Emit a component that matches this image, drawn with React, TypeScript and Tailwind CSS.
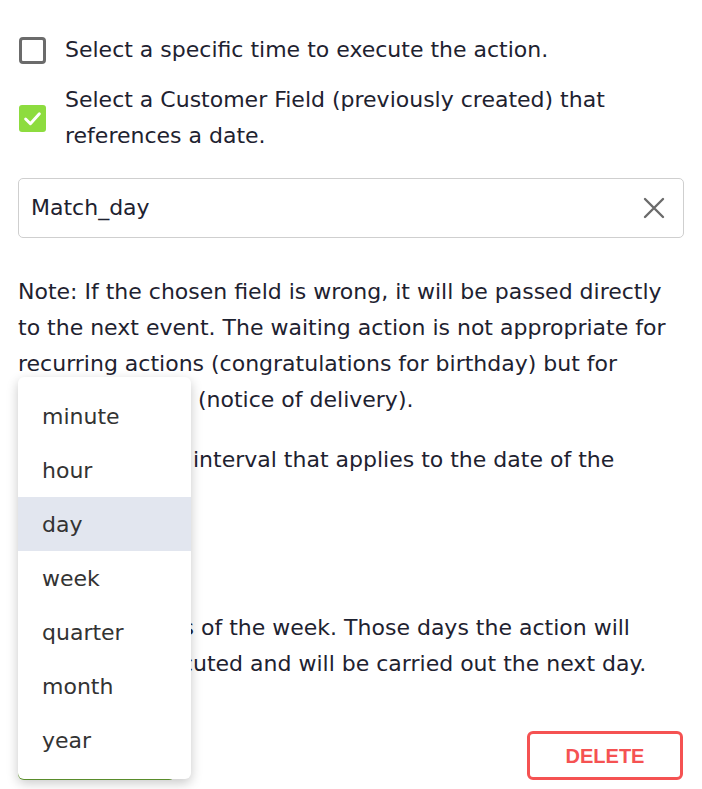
import React from "react";

const items = ["minute", "hour", "day", "week", "quarter", "month", "year"];

export default function App() {
  return (
    <div className="relative w-[702px] h-[789px] bg-white overflow-hidden text-[#1e2230] font-['DejaVu_Sans',sans-serif]">
      <div className="flex flex-col px-[18px] pt-[32px] text-[22px] leading-[36px]">
        <label className="flex items-center gap-[19px] pl-[1px]">
          <span className="w-[27px] h-[27px] shrink-0 rounded-[4px] border-[3px] border-[#6b6b6b] bg-white" />
          <span className="whitespace-nowrap">Select a specific time to execute the action.</span>
        </label>
        <label className="mt-[14px] flex items-center gap-[19px] pl-[1px]">
          <span className="w-[27px] h-[27px] shrink-0 rounded-[3px] bg-[#8ddc3f] flex items-center justify-center">
            <svg width="19" height="19" viewBox="0 0 18 18" fill="none">
              <path d="M2.5 9.5 L7 14 L15.5 4.5" stroke="white" strokeWidth="2.8" strokeLinecap="round" strokeLinejoin="round" />
            </svg>
          </span>
          <span className="whitespace-nowrap">
            Select a Customer Field (previously created) that
            <br />
            references a date.
          </span>
        </label>

        <div className="mt-[24px] h-[60px] rounded-[5px] border border-[#cfcfcf] flex items-center justify-between pl-[12px] pr-[18px]">
          <span>Match_day</span>
          <svg width="22" height="22" viewBox="0 0 22 22" fill="none">
            <path d="M2 2 L20 20 M20 2 L2 20" stroke="#6b6b6b" strokeWidth="2.4" strokeLinecap="round" />
          </svg>
        </div>

        <p className="mt-[36px] whitespace-nowrap">
          Note: If the chosen field is wrong, it will be passed directly
          <br />
          to the next event. The waiting action is not appropriate for
          <br />
          recurring actions (congratulations for birthday) but for
          <br />
          <span className="inline-block w-[173px] overflow-hidden whitespace-nowrap text-right align-top">single actions</span>{" "}
          (notice of delivery).
        </p>

        <p className="mt-[24px] whitespace-nowrap">
          <span className="inline-block w-[168px] overflow-hidden whitespace-nowrap text-right align-top">Define a time</span>{" "}
          interval that applies to the date of the
          <br />
          event.
        </p>

        <div className="h-[96px] flex items-center">
          <div className="w-[173px] h-[52px] rounded-[5px] border border-[#cfcfcf] flex items-center pl-[12px]">
            day
          </div>
        </div>

        <p className="whitespace-nowrap">
          <span className="inline-block w-[176px] overflow-hidden whitespace-nowrap text-right align-top">Skip days</span>{" "}
          of the week. Those days the action will
          <br />
          <span className="inline-block w-[175px] overflow-hidden whitespace-nowrap text-right align-top">not be exec</span>
          uted and will be carried out the next day.
        </p>

        <div className="mt-[49px] flex items-center justify-between">
          <button className="w-[157px] h-[48px] rounded-[6px] bg-[#6aa633] text-white font-bold text-[20px] font-['Liberation_Sans',sans-serif]">
            SAVE
          </button>
          <button className="w-[156px] h-[49px] mr-[1px] rounded-[6px] border-[3px] border-[#f55252] text-[#f55252] font-bold text-[20px] font-['Liberation_Sans',sans-serif] bg-white">
            DELETE
          </button>
        </div>
      </div>

      <div className="absolute left-[18px] top-[377px] w-[173px] py-[12px] rounded-[6px] bg-white shadow-[0_4px_12px_rgba(0,0,0,0.22)] text-[22px] text-[#333333]">
        {items.map((it) => (
          <div
            key={it}
            className={it === "day" ? "h-[54px] flex items-center pl-[24px] bg-[#e2e6ef]" : "h-[54px] flex items-center pl-[24px]"}
          >
            {it}
          </div>
        ))}
      </div>
    </div>
  );
}
